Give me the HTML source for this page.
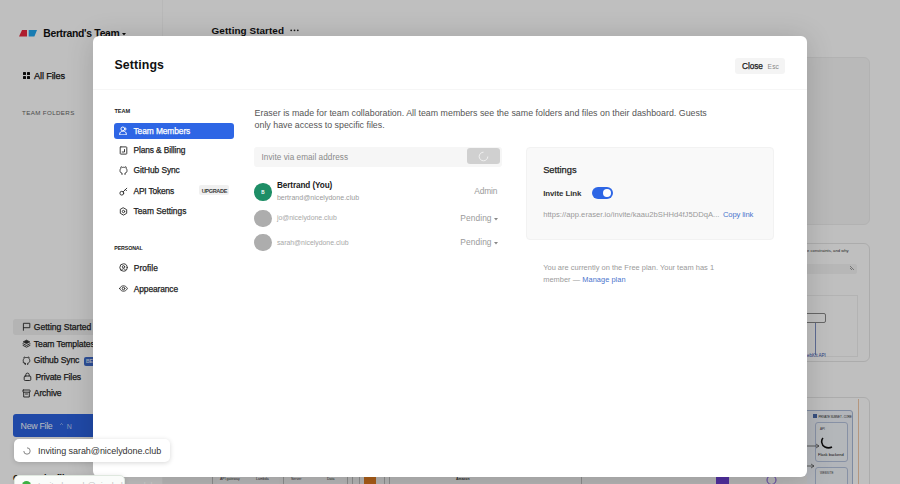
<!DOCTYPE html>
<html><head><meta charset="utf-8">
<style>
*{box-sizing:border-box;margin:0;padding:0}
html,body{width:900px;height:484px;overflow:hidden;background:#fff;font-family:"Liberation Sans",sans-serif;color:#111}
.abs{position:absolute}
.t{position:absolute;white-space:nowrap;line-height:normal}
.m{-webkit-text-stroke:0.25px currentColor}
#overlay{position:absolute;left:0;top:0;width:900px;height:484px;background:rgba(0,0,0,0.25)}
#modalbg{position:absolute;left:93px;top:36px;width:714px;height:441px;background:#fff;border-radius:6px;box-shadow:0 2px 28px rgba(0,0,0,0.16)}
</style></head><body>
<div class="abs" style="left:0px;top:0px;width:163px;height:484px;background:#fff;border-right:1px solid #f6f6f6"></div>
<svg class="abs" style="left:19px;top:30px" width="19" height="7" viewBox="0 0 19 7"><path d="M3 0H8V6.6H0z" fill="#e8293f"/><path d="M9.7 0H18L15.4 6.6H9.7z" fill="#22a6ee"/></svg>
<div class="t" style="left:43.20px;top:28px;font-size:10.40px;color:#111;font-weight:bold;letter-spacing:-0.297px;">Bertrand's Team</div>
<svg class="abs" style="left:122px;top:33px" width="4" height="3" viewBox="0 0 4 3"><path d="M0 0H4L2 2.6z" fill="#111"/></svg>
<svg class="abs" style="left:23px;top:72px" width="7" height="7" viewBox="0 0 7 7"><g fill="#111"><rect x="0" y="0" width="3" height="3" rx=".6"/><rect x="4" y="0" width="3" height="3" rx=".6"/><rect x="0" y="4" width="3" height="3" rx=".6"/><rect x="4" y="4" width="3" height="3" rx=".6"/></g></svg>
<div class="t m" style="left:34.00px;top:71px;font-size:9.20px;color:#111;letter-spacing:-0.132px;">All Files</div>
<div class="t" style="left:22.00px;top:109px;font-size:6.20px;color:#666;letter-spacing:0.381px;">TEAM FOLDERS</div>
<div class="abs" style="left:13px;top:319px;width:110px;height:16px;background:#f0f0f0;border-radius:3px"></div>
<div class="t m" style="left:33.80px;top:322px;font-size:8.60px;color:#222;letter-spacing:-0.019px;">Getting Started</div>
<div class="t m" style="left:33.80px;top:339px;font-size:8.60px;color:#222;letter-spacing:-0.113px;">Team Templates</div>
<div class="t m" style="left:33.80px;top:355px;font-size:8.60px;color:#222;letter-spacing:-0.119px;">Github Sync</div>
<div class="abs" style="left:84px;top:356.5px;width:16px;height:9px;background:#3d68c8;border-radius:2px"></div>
<div class="t" style="left:86.00px;top:358px;font-size:5.00px;color:#dfe8ff;font-weight:bold;">BETA</div>
<div class="t m" style="left:35.50px;top:372px;font-size:8.60px;color:#222;letter-spacing:-0.142px;">Private Files</div>
<div class="t m" style="left:33.80px;top:388px;font-size:8.60px;color:#222;letter-spacing:-0.146px;">Archive</div>
<svg class="abs" style="left:22px;top:322px" width="9" height="9" viewBox="0 0 9 9"><path d="M1.4 8.3V1.3h6.4v4.4H1.4" fill="none" stroke="#333" stroke-width="0.95" stroke-linejoin="round" stroke-linecap="round"/></svg>
<svg class="abs" style="left:22px;top:339px" width="9" height="9" viewBox="0 0 9 9"><path d="M4.5 1L8 2.9 4.5 4.7 1 2.9z" fill="#333" stroke="#333" stroke-width=".6" stroke-linejoin="round"/><path d="M1 4.7l3.5 1.8 3.5-1.8M1 6.4l3.5 1.8 3.5-1.8" fill="none" stroke="#333" stroke-width="0.95" stroke-linejoin="round" stroke-linecap="round"/></svg>
<svg class="abs" style="left:22px;top:356px" width="9" height="9" viewBox="0 0 9 9"><path d="M3.3 8.6V7.2C1.9 7 1.2 6 1.2 4.6c0-.8.3-1.5.8-2-.1-.5-.1-1 .2-1.6.6 0 1.1.3 1.5.6.5-.1.9-.1 1.6 0 .4-.3.9-.6 1.5-.6.3.6.3 1.1.2 1.6.5.5.8 1.2.8 2 0 1.4-.7 2.4-2.1 2.6v1.4M3.3 7.6c-1 .3-1.6-.3-2-1" fill="none" stroke="#333" stroke-width="0.95" stroke-linejoin="round" stroke-linecap="round"/></svg>
<svg class="abs" style="left:23px;top:372px" width="9" height="9" viewBox="0 0 9 9"><rect x="1.2" y="4" width="6.6" height="4.5" rx="1" fill="none" stroke="#333" stroke-width="0.95" stroke-linejoin="round" stroke-linecap="round"/><path d="M2.8 4V2.8a1.7 1.7 0 013.4 0V4" fill="none" stroke="#333" stroke-width="0.95" stroke-linejoin="round" stroke-linecap="round"/></svg>
<svg class="abs" style="left:22px;top:389px" width="9" height="9" viewBox="0 0 9 9"><rect x="1" y="1" width="7" height="2.2" rx=".3" fill="none" stroke="#333" stroke-width="0.95" stroke-linejoin="round" stroke-linecap="round"/><path d="M1.7 3.2V8h5.6V3.2M3.5 5h2" fill="none" stroke="#333" stroke-width="0.95" stroke-linejoin="round" stroke-linecap="round"/></svg>
<div class="abs" style="left:13px;top:414px;width:110px;height:23px;background:#2b62df;border-radius:3px"></div>
<div class="t" style="left:20.60px;top:421px;font-size:8.80px;color:#f4f7ff;letter-spacing:-0.303px;">New File</div>
<svg class="abs" style="left:59.5px;top:423px" width="3" height="2" viewBox="0 0 3 2"><path d="M0.3 1.7L1.5 0.5 2.7 1.7" fill="none" stroke="#b8cbf5" stroke-width=".8"/></svg>
<div class="t" style="left:66.80px;top:423px;font-size:7.00px;color:#b8cbf5;">N</div>
<div class="t" style="left:13.00px;top:473px;font-size:9.00px;color:#111;font-weight:bold;">Created 5 files</div>
<div class="t" style="left:211.60px;top:25px;font-size:9.90px;color:#111;font-weight:bold;letter-spacing:0.075px;">Getting Started</div>
<svg class="abs" style="left:290px;top:29px" width="9" height="3" viewBox="0 0 9 3"><g fill="#222"><circle cx="1.2" cy="1.3" r="0.9"/><circle cx="4.5" cy="1.3" r="0.9"/><circle cx="7.8" cy="1.3" r="0.9"/></g></svg>
<div class="abs" style="left:600px;top:57px;width:270px;height:168px;background:#f7f7f7;border-radius:6px;border:1px solid #eeeeee"></div>
<div class="abs" style="left:600px;top:243px;width:270px;height:119px;background:#fff;border-radius:6px;border:1px solid #e6e6e6"></div>
<div class="t" style="left:807.00px;top:248px;font-size:4.20px;color:#333;">e constraints, and why</div>
<div class="abs" style="left:700px;top:264px;width:157px;height:10px;background:#f5f5f5;border-radius:2px"></div>
<svg class="abs" style="left:849px;top:265px" width="6" height="6" viewBox="0 0 6 6"><path d="M1 1l4 4M1 3l2 2" stroke="#777" stroke-width=".7"/></svg>
<div class="abs" style="left:700px;top:295px;width:158px;height:62px;background:#fff;border:1px solid #efefef"></div>
<div class="abs" style="left:700px;top:313px;width:126px;height:10px;background:#fff;border:1px solid #888;border-radius:2px"></div>
<div class="abs" style="left:815px;top:323px;width:1px;height:32px;background:#7d8fc4;"></div>
<div class="t" style="left:807.00px;top:353px;font-size:4.60px;color:#3c56b0;">ebKit API</div>
<div class="abs" style="left:600px;top:397px;width:270px;height:100px;background:#fff;border-radius:6px;border:1px solid #e6e6e6"></div>
<div class="abs" style="left:858px;top:399px;width:1px;height:90px;background:#f0c9a8;"></div>
<div class="abs" style="left:700px;top:410px;width:153px;height:90px;background:#eef2f8;border:1px solid #a9b8d6;border-radius:3px"></div>
<div class="abs" style="left:813px;top:414px;width:4px;height:4px;background:#4a6aa8;"></div>
<div class="t" style="left:818.50px;top:415px;font-size:3.00px;color:#333;letter-spacing:-0.165px;">PRIVATE SUBNET - CORE</div>
<div class="abs" style="left:815px;top:422px;width:33px;height:40px;background:#f1f4f9;border:1px solid #b5c2dc;border-radius:3px"></div>
<div class="t" style="left:820.00px;top:427px;font-size:3.00px;color:#444;">API</div>
<svg class="abs" style="left:819px;top:437px" width="14" height="12" viewBox="0 0 14 12"><path d="M4 1C2 3 2 8 6 10 8 11 11 11 13 10" fill="none" stroke="#111" stroke-width="1.6"/></svg>
<div class="t" style="left:818.00px;top:452px;font-size:4.00px;color:#111;">Flask backend</div>
<svg class="abs" style="left:800px;top:443px" width="20" height="6" viewBox="0 0 20 6"><path d="M0 3H19M16 1l3 2-3 2" fill="none" stroke="#444" stroke-width=".7"/></svg>
<svg class="abs" style="left:800px;top:463px" width="15" height="6" viewBox="0 0 15 6"><path d="M0 3H14M11 1l3 2-3 2" fill="none" stroke="#444" stroke-width=".7"/></svg>
<div class="abs" style="left:815px;top:467px;width:33px;height:30px;background:#f1f4f9;border:1px solid #b5c2dc;border-radius:3px"></div>
<div class="t" style="left:820.00px;top:471px;font-size:3.00px;color:#444;">WEBSITE</div>
<div class="abs" style="left:163px;top:476px;width:644px;height:8px;background:#f2f2f2;"></div>
<div class="abs" style="left:212px;top:476px;width:1px;height:8px;background:#bdbdbd;"></div>
<div class="abs" style="left:283px;top:476px;width:1px;height:8px;background:#bdbdbd;"></div>
<div class="abs" style="left:347px;top:476px;width:1px;height:8px;background:#bdbdbd;"></div>
<div class="abs" style="left:352px;top:476px;width:1px;height:8px;background:#bdbdbd;"></div>
<div class="abs" style="left:359px;top:476px;width:1px;height:8px;background:#bdbdbd;"></div>
<div class="abs" style="left:384px;top:476px;width:1px;height:8px;background:#bdbdbd;"></div>
<div class="abs" style="left:389px;top:476px;width:1px;height:8px;background:#bdbdbd;"></div>
<div class="abs" style="left:581px;top:476px;width:1px;height:8px;background:#bdbdbd;"></div>
<div class="abs" style="left:217px;top:476px;width:62px;height:8px;background:#f3f3f5;"></div>
<div class="abs" style="left:290px;top:476px;width:55px;height:8px;background:#f3f3f5;"></div>
<div class="t" style="left:220.00px;top:477px;font-size:3.50px;color:#333;">API gateway</div>
<div class="t" style="left:256.00px;top:477px;font-size:3.50px;color:#333;">Lambda</div>
<div class="t" style="left:291.00px;top:477px;font-size:3.50px;color:#333;">Server</div>
<div class="t" style="left:327.00px;top:477px;font-size:3.50px;color:#333;">Data</div>
<div class="abs" style="left:364px;top:476px;width:12px;height:8px;background:#e07b20;"></div>
<div class="t" style="left:456.00px;top:477px;font-size:3.50px;color:#333;font-weight:bold;">Amazon</div>
<div class="abs" style="left:716px;top:476px;width:13px;height:8px;background:#6a3fd0;"></div>
<svg class="abs" style="left:766px;top:475px" width="11" height="9" viewBox="0 0 11 9"><circle cx="5.5" cy="5" r="4.5" fill="none" stroke="#6a3fd0" stroke-width=".9"/></svg>
<div id="overlay"></div>
<div id="modalbg"></div>
<div class="t" style="left:114.40px;top:58px;font-size:12.35px;color:#111;font-weight:bold;letter-spacing:0.117px;">Settings</div>
<div class="abs" style="left:93px;top:89px;width:714px;height:1px;background:#f6f6f6;"></div>
<div class="abs" style="left:735px;top:58px;width:50px;height:16px;background:#f4f4f4;border-radius:3px"></div>
<div class="t m" style="left:742.00px;top:61px;font-size:8.30px;color:#1a1a1a;letter-spacing:-0.061px;">Close</div>
<div class="t" style="left:767.60px;top:63px;font-size:6.60px;color:#888;letter-spacing:0.155px;">Esc</div>
<div class="t" style="left:114.40px;top:108px;font-size:5.60px;color:#222;font-weight:bold;letter-spacing:-0.011px;">TEAM</div>
<div class="abs" style="left:114px;top:122.7px;width:120px;height:16px;background:#2e66e5;border-radius:3px"></div>
<div class="t m" style="left:133.50px;top:126px;font-size:8.40px;color:#fff;letter-spacing:-0.082px;">Team Members</div>
<div class="t m" style="left:133.50px;top:145px;font-size:8.40px;color:#222;letter-spacing:-0.119px;">Plans &amp; Billing</div>
<div class="t m" style="left:133.50px;top:165px;font-size:8.40px;color:#222;letter-spacing:-0.071px;">GitHub Sync</div>
<div class="t m" style="left:133.50px;top:186px;font-size:8.40px;color:#222;letter-spacing:-0.18px;">API Tokens</div>
<div class="abs" style="left:199.2px;top:185.4px;width:30.2px;height:9.3px;background:#f0f0f0;border-radius:2px"></div>
<div class="t" style="left:201.70px;top:188px;font-size:5.60px;color:#3a3a3a;font-weight:bold;letter-spacing:-0.375px;">UPGRADE</div>
<div class="t m" style="left:133.50px;top:206px;font-size:8.40px;color:#222;letter-spacing:-0.02px;">Team Settings</div>
<div class="t" style="left:114.30px;top:245px;font-size:5.30px;color:#222;font-weight:bold;letter-spacing:-0.134px;">PERSONAL</div>
<div class="t m" style="left:133.80px;top:263px;font-size:8.40px;color:#222;letter-spacing:0.042px;">Profile</div>
<div class="t m" style="left:133.80px;top:284px;font-size:8.40px;color:#222;letter-spacing:-0.102px;">Appearance</div>
<svg class="abs" style="left:119px;top:126px" width="9" height="9" viewBox="0 0 9 9"><circle cx="3.8" cy="2.9" r="1.9" fill="none" stroke="#fff" stroke-width="0.95" stroke-linejoin="round" stroke-linecap="round"/><path d="M0.7 8.5v-.5c0-1.6 1.2-2.7 2.8-2.7h1c1.6 0 2.8 1.1 2.8 2.7v.5z" fill="none" stroke="#fff" stroke-width="0.95" stroke-linejoin="round" stroke-linecap="round"/><path d="M6.2 1.6a1.6 1.6 0 0 1 0 2.8" fill="none" stroke="#fff" stroke-width="0.95" stroke-linejoin="round" stroke-linecap="round"/></svg>
<svg class="abs" style="left:119px;top:146px" width="9" height="9" viewBox="0 0 9 9"><rect x="1.2" y="0.9" width="6.6" height="7.2" rx=".6" fill="none" stroke="#333" stroke-width="0.95" stroke-linejoin="round" stroke-linecap="round"/><path d="M5.5 3.5v2.5H3.2" fill="none" stroke="#333" stroke-width="0.95" stroke-linejoin="round" stroke-linecap="round"/></svg>
<svg class="abs" style="left:119px;top:166px" width="9" height="9" viewBox="0 0 9 9"><path d="M3 8.5V7C1.5 7 1 6 1 4.5 1 3.6 1.3 2.9 1.8 2.3 1.7 1.8 1.7 1.3 2 0.8c.6 0 1.1.3 1.5.6.7-.2 1.3-.2 2 0 .4-.3.9-.6 1.5-.6.3.5.3 1 .2 1.5.5.6.8 1.3.8 2.2 0 1.5-.5 2.5-2 2.5v1.5" fill="none" stroke="#333" stroke-width="0.95" stroke-linejoin="round" stroke-linecap="round"/></svg>
<svg class="abs" style="left:119px;top:187px" width="9" height="9" viewBox="0 0 9 9"><circle cx="2.8" cy="6.2" r="1.9" fill="none" stroke="#333" stroke-width="0.95" stroke-linejoin="round" stroke-linecap="round"/><path d="M4.2 4.8L7.8 1.2M6.4 2.6l1.1 1.1" fill="none" stroke="#333" stroke-width="0.95" stroke-linejoin="round" stroke-linecap="round"/></svg>
<svg class="abs" style="left:119px;top:207px" width="9" height="9" viewBox="0 0 9 9"><path d="M4.5 0.9l3.2 1.8v3.6L4.5 8.1 1.3 6.3V2.7z" fill="none" stroke="#333" stroke-width="0.95" stroke-linejoin="round" stroke-linecap="round"/><circle cx="4.5" cy="4.5" r="1.2" fill="none" stroke="#333" stroke-width="0.95" stroke-linejoin="round" stroke-linecap="round"/></svg>
<svg class="abs" style="left:119px;top:263px" width="9" height="9" viewBox="0 0 9 9"><circle cx="4.5" cy="4.5" r="3.7" fill="none" stroke="#333" stroke-width="0.95" stroke-linejoin="round" stroke-linecap="round"/><circle cx="4.5" cy="3.8" r="1.2" fill="none" stroke="#333" stroke-width="0.95" stroke-linejoin="round" stroke-linecap="round"/><path d="M2.6 7c.5-.9 1.1-1.3 1.9-1.3s1.4.4 1.9 1.3" fill="none" stroke="#333" stroke-width="0.95" stroke-linejoin="round" stroke-linecap="round"/></svg>
<svg class="abs" style="left:119px;top:284px" width="9" height="9" viewBox="0 0 9 9"><path d="M0.6 4.5C1.6 2.6 3 1.8 4.5 1.8S7.4 2.6 8.4 4.5C7.4 6.4 6 7.2 4.5 7.2S1.6 6.4 0.6 4.5z" fill="none" stroke="#333" stroke-width="0.95" stroke-linejoin="round" stroke-linecap="round"/><circle cx="4.5" cy="4.5" r="1.3" fill="none" stroke="#333" stroke-width="0.95" stroke-linejoin="round" stroke-linecap="round"/></svg>
<div class="t" style="left:254.60px;top:108px;font-size:8.83px;color:#555;letter-spacing:0.011px;">Eraser is made for team collaboration. All team members see the same folders and files on their dashboard. Guests</div>
<div class="t" style="left:254.60px;top:120px;font-size:8.83px;color:#555;">only have access to specific files.</div>
<div class="abs" style="left:254px;top:146.5px;width:248px;height:20px;background:#f6f6f6;border-radius:3px"></div>
<div class="t" style="left:261.50px;top:153px;font-size:8.19px;color:#8a8a8a;letter-spacing:0.047px;">Invite via email address</div>
<div class="abs" style="left:466.8px;top:148.4px;width:33.6px;height:16px;background:#d0d0d0;border-radius:3px"></div>
<svg class="abs" style="left:478px;top:151px" width="11" height="11" viewBox="0 0 11 11"><path d="M5.5 1.2A4.3 4.3 0 1 0 9.8 5.5" fill="none" stroke="#f4f4f4" stroke-width="0.9"/></svg>
<div class="abs" style="left:254.3px;top:183.3px;width:17.5px;height:17.5px;border-radius:50%;background:#1e8e66"></div>
<div class="t" style="left:261.30px;top:190px;font-size:4.60px;color:#fff;font-weight:bold;">B</div>
<div class="t" style="left:276.90px;top:181px;font-size:8.20px;color:#1a1a1a;font-weight:bold;letter-spacing:-0.096px;">Bertrand (You)</div>
<div class="t" style="left:276.90px;top:194px;font-size:7.00px;color:#9a9a9a;letter-spacing:0.031px;">bertrand@nicelydone.club</div>
<div class="t" style="left:474.20px;top:186px;font-size:8.40px;color:#9a9a9a;letter-spacing:-0.113px;">Admin</div>
<div class="abs" style="left:254.3px;top:209.9px;width:17.5px;height:17.5px;border-radius:50%;background:#adadad"></div>
<div class="t" style="left:276.90px;top:214px;font-size:6.90px;color:#a8a8a8;letter-spacing:-0.002px;">jo@nicelydone.club</div>
<div class="t" style="left:460.30px;top:213px;font-size:8.40px;color:#9a9a9a;letter-spacing:0.083px;">Pending</div>
<svg class="abs" style="left:494px;top:218px" width="4" height="3" viewBox="0 0 4 3"><path d="M0 0H4L2 2.5z" fill="#888"/></svg>
<div class="abs" style="left:254.3px;top:233.9px;width:17.5px;height:17.5px;border-radius:50%;background:#adadad"></div>
<div class="t" style="left:276.90px;top:239px;font-size:6.90px;color:#a8a8a8;letter-spacing:-0.003px;">sarah@nicelydone.club</div>
<div class="t" style="left:460.30px;top:237px;font-size:8.40px;color:#9a9a9a;letter-spacing:0.083px;">Pending</div>
<svg class="abs" style="left:494px;top:241.5px" width="4" height="3" viewBox="0 0 4 3"><path d="M0 0H4L2 2.5z" fill="#888"/></svg>
<div class="abs" style="left:525.6px;top:146.8px;width:248px;height:93px;background:#f9f9f9;border-radius:4px;border:1px solid #f2f2f2"></div>
<div class="t m" style="left:543.20px;top:165px;font-size:9.30px;color:#222;letter-spacing:-0.035px;">Settings</div>
<div class="t" style="left:543.20px;top:189px;font-size:7.90px;color:#333;font-weight:bold;letter-spacing:-0.076px;">Invite Link</div>
<div class="abs" style="left:592px;top:187.4px;width:21px;height:11.8px;background:#2e66e5;border-radius:6px"></div>
<div class="abs" style="left:603.4px;top:189.4px;width:7.8px;height:7.8px;border-radius:50%;background:#fff"></div>
<div class="t" style="left:543.20px;top:210px;font-size:7.61px;color:#9a9a9a;letter-spacing:0.024px;">https://app.eraser.io/invite/kaau2bSHHd4fJ5DDqA...</div>
<div class="t" style="left:723.00px;top:210px;font-size:7.60px;color:#4a74cc;letter-spacing:-0.112px;">Copy link</div>
<div class="t" style="left:543.20px;top:263px;font-size:7.46px;color:#9a9a9a;letter-spacing:0.009px;">You are currently on the Free plan. Your team has 1</div>
<div class="t" style="left:543.20px;top:275px;font-size:7.40px;color:#9a9a9a;letter-spacing:0.054px;">member &mdash; <span style="color:#4a74cc">Manage plan</span></div>
<div class="abs" style="left:14px;top:438.6px;width:156px;height:23px;background:#fff;border-radius:5px;box-shadow:0 1px 5px rgba(0,0,0,0.16)"></div>
<svg class="abs" style="left:23px;top:447px" width="8" height="8" viewBox="0 0 8 8"><path d="M4 0.8A3.2 3.2 0 1 1 0.8 4" fill="none" stroke="#777" stroke-width="0.9"/></svg>
<div class="t" style="left:38.00px;top:446px;font-size:9.00px;color:#333;letter-spacing:-0.052px;">Inviting sarah@nicelydone.club</div>
<div class="abs" style="left:13.7px;top:475.2px;width:111px;height:20px;background:#fafcfa;border-radius:5px;border:1px solid #dfe8df;box-shadow:0 1px 5px rgba(0,0,0,0.12)"></div>
<div class="abs" style="left:21.8px;top:480.7px;width:9.5px;height:9.5px;border-radius:50%;background:#3cb043"></div>
<div class="t" style="left:38.00px;top:481px;font-size:8.60px;color:#c4c4c4;">Invited sarah@nicelydone.club</div>
</body></html>
